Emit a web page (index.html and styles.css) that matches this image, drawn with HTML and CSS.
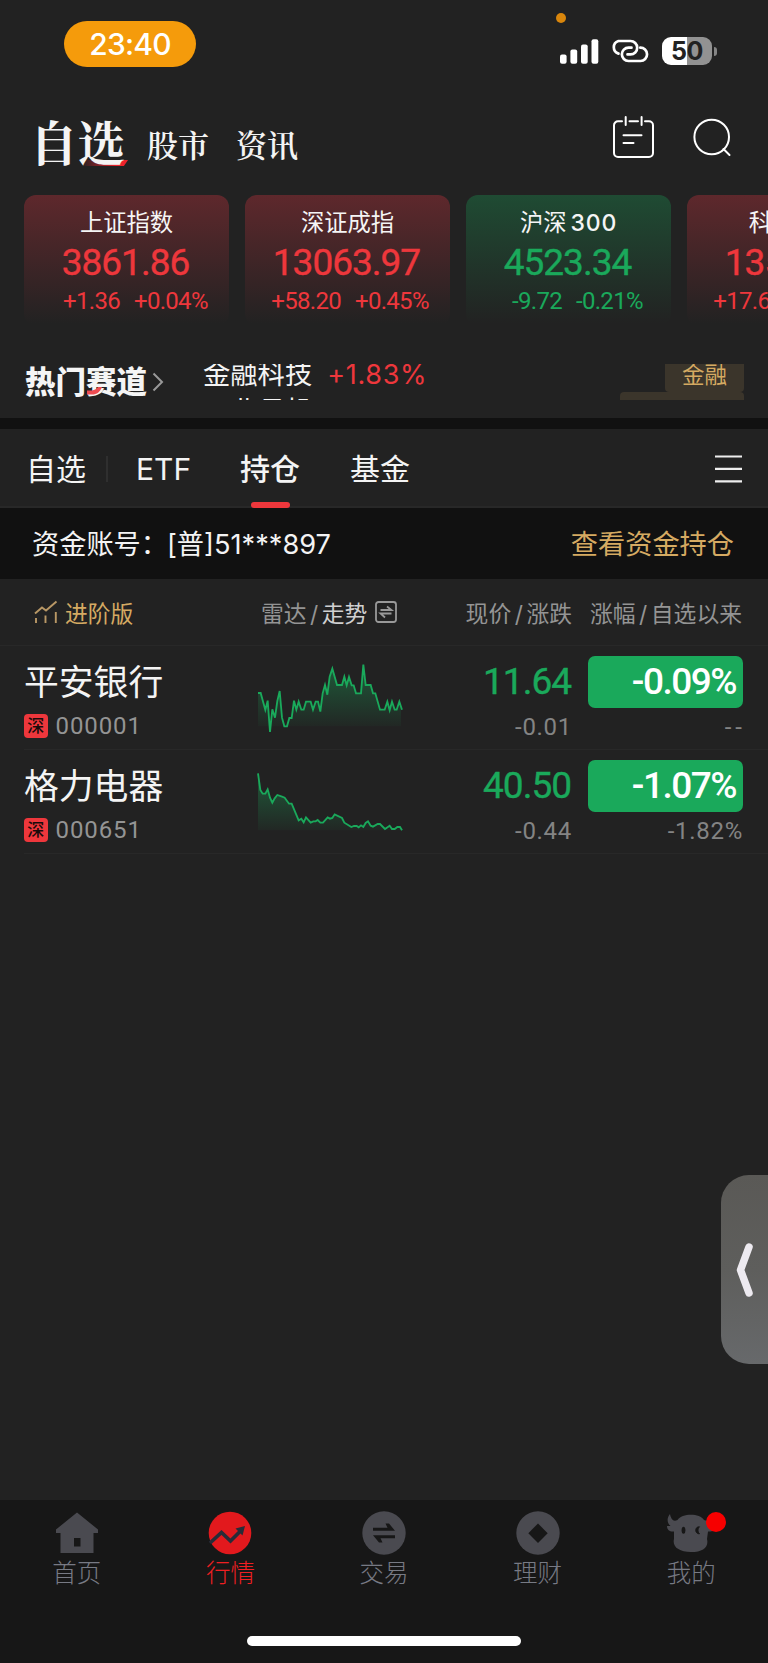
FILE: index.html
```html
<!DOCTYPE html>
<html lang="zh-CN">
<head>
<meta charset="utf-8">
<title>自选</title>
<link rel="stylesheet" href="styles.css">
</head>
<body>
<div class="app">
  <header class="status">
    <span class="clock">23:40</span>
    <span class="mic-dot"></span>
    <div class="status-icons">
      <svg class="signal" width="39" height="25" viewBox="0 0 39 25" fill="#fff"><rect x="0" y="15.5" width="6.6" height="9.3" rx="2"/><rect x="10.4" y="10.5" width="6.8" height="14.3" rx="2"/><rect x="21" y="5.5" width="6.7" height="19.3" rx="2"/><rect x="31.5" y=".3" width="6.8" height="24.5" rx="2"/></svg>
      <svg class="link" width="39" height="24" viewBox="0 0 39 24" fill="none" stroke="#fff" stroke-width="2.7" stroke-linecap="round"><path d="M8.500 14.600A6.600 6.600 0 0 1 8.400 2H20.500A6.600 6.600 0 0 1 20.500 15.400H17.500"/><path d="M30.300 8.700A6.600 6.600 0 0 1 30.500 22H18.500A6.600 6.600 0 0 1 18.500 8.700H21.500"/></svg>
      <div class="battery"><b>50</b></div>
      <span class="nub"></span>
    </div>
  </header>

  <nav class="top">
    <span class="top-main">自选</span>
    <span class="top-item">股市</span>
    <span class="top-item">资讯</span>
    <svg class="calendar" width="42" height="44" viewBox="0 0 42 44" fill="none" stroke="#fff" stroke-width="2" stroke-linecap="round"><path d="M9 6.300H5a4 4 0 0 0-4 4V38a4 4 0 0 0 4 4H36a4 4 0 0 0 4-4V10.300a4 4 0 0 0-4-4H32M16.500 6.300H25M12.700 2V10M28.600 2V10M10.500 20.200H28.500M10.500 28H20.500"/></svg>
    <svg class="search" width="40" height="40" viewBox="0 0 40 40" fill="none" stroke="#fff" stroke-width="2" stroke-linecap="round"><circle cx="18.700" cy="19" r="17.300"/><path d="M30.500 31L36.500 37"/></svg>
  </nav>

  <section class="indices">
    <div class="card up"><h3>上证指数</h3><strong>3861.86</strong><p><span>+1.36</span><span>+0.04%</span></p></div>
    <div class="card up"><h3>深证成指</h3><strong>13063.97</strong><p><span>+58.20</span><span>+0.45%</span></p></div>
    <div class="card down"><h3>沪深<i>300</i></h3><strong>4523.34</strong><p><span>-9.72</span><span>-0.21%</span></p></div>
    <div class="card up"><h3>科创<i>50</i></h3><strong>1350.52</strong><p><span>+17.68</span><span>+1.33%</span></p></div>
  </section>

  <section class="hot">
    <h2>热门赛道<svg width="16" height="8" viewBox="0 0 16 8"><path d="M0 3.500C5 4 9 3 11 0H15C13 5 10 7.500 5 7.500H0z" fill="#ee4b50"/></svg></h2>
    <svg class="chev" width="12" height="20" viewBox="0 0 12 20" fill="none" stroke="#999" stroke-width="2"><path d="M1.500 1.500L10 10L1.500 18.500"/></svg>
    <div class="ticker">
      <div class="tick"><span>金融科技</span><em>+1.83%</em><mark>金融</mark></div>
      <div class="tick next"><span>工业母机</span><em>+1.52%</em><mark>科技成长</mark></div>
    </div>
  </section>

  <nav class="tabs">
    <span class="tab first">自选</span>
    <i class="sep"></i>
    <span class="tab etf">ETF</span>
    <span class="tab active">持仓</span>
    <span class="tab fund">基金</span>
    <svg class="menu" width="27" height="28" viewBox="0 0 27 28" stroke="#eee" stroke-width="2.200"><path d="M0 1.500H27M0 13.900H27M0 26.300H27"/></svg>
  </nav>

  <section class="account"><span>资金账号：</span><span class="acct">[普]51***897</span><a>查看资金持仓</a></section>

  <section class="cols">
    <svg class="adv" width="24" height="24" viewBox="0 0 24 24" fill="none" stroke="#b99866" stroke-width="1.900"><path d="M1 13.500L8 7.500L12 10.500L22.500 1.500M2 18V23M11.500 15.500V23M21.800 12V23"/></svg>
    <span class="gold">进阶版</span>
    <span class="trend">雷达<i>/</i><b>走势</b></span>
    <svg class="swap" width="22" height="22" viewBox="0 0 22 22" fill="none" stroke="#999" stroke-width="1.800"><rect x="1" y="1" width="20" height="20" rx="2.500"/><path d="M5.500 9H16.500L12 5.500M16.500 12.500H5.500L10 16.500"/></svg>
    <span class="c-price">现价<i>/</i>涨跌</span>
    <span class="c-pct">涨幅<i>/</i>自选以来</span>
  </section>

  <section class="stock">
    <div class="who"><h4>平安银行</h4><p><span class="mk">深</span>000001</p></div>
    <svg width="148" height="104" viewBox="768 20 444 312"><defs><linearGradient id="g" x1="0" y1="0" x2="0" y2="1"><stop offset="0" stop-color="#1aa95b" stop-opacity=".42"/><stop offset="1" stop-color="#1aa95b" stop-opacity=".04"/></linearGradient></defs>
    <path fill="url(#g)" d="M774 261V161H782L796 212L803 184L810 261L817 210L825 235L832 185L839 155L846 235L853 261L861 261L868 236H875L882 184L889 211L896 187L904 211H911L918 187H932L939 211L947 187H954L961 217L968 162L975 137L982 166L989 112L997 88L1011 137H1026L1033 112L1040 138L1047 113L1055 138H1061L1068 162H1083L1090 76L1097 137H1112L1119 162H1126L1140 211H1154L1162 187L1169 213L1176 187L1184 211H1190L1198 187L1203 200V261z"/>
    <polyline class="line" points="774,161 782,161 796,212 803,184 810,278 817,210 825,235 832,185 839,155 846,235 853,261 861,261 868,236 875,236 882,184 889,211 896,187 904,211 911,211 918,187 932,187 939,211 947,187 954,187 961,217 968,162 975,137 982,166 989,112 997,88 1004,112 1011,137 1026,137 1033,112 1040,138 1047,113 1055,138 1061,138 1068,162 1083,162 1090,76 1097,137 1112,137 1119,162 1126,162 1140,211 1154,211 1162,187 1169,213 1176,187 1184,211 1190,211 1198,187 1206,211"/></svg>
    <div class="price"><strong>11.64</strong><span>-0.01</span></div>
    <div class="pct"><strong>-0.09%</strong><span class="none">--</span></div>
  </section>
  <section class="stock">
    <div class="who"><h4>格力电器</h4><p><span class="mk">深</span>000651</p></div>
    <svg width="148" height="104" viewBox="768 332 444 312">
    <path fill="url(#g)" d="M774 573V402L781 452L788 463H796L803 450L810 475L817 490L832 467L854 475L867 493H875L896 543L904 538L911 549L918 534L932 550L953 542L961 550H969L983 534L997 536L1004 525L1026 536L1033 550L1054 563L1083 558L1104 546L1119 562L1140 554L1155 569L1203 570V573z"/>
    <polyline class="line" points="774,402 781,452 788,463 796,463 803,450 810,475 817,490 824,477 832,467 846,472 854,475 867,493 875,493 896,543 904,538 911,549 918,534 932,550 940,546 947,546 953,542 961,550 969,550 983,534 990,538 997,536 1004,525 1026,536 1033,550 1054,563 1062,560 1070,560 1076,564 1083,558 1090,563 1097,551 1104,546 1112,559 1119,562 1133,554 1140,554 1155,569 1169,559 1176,569 1184,569 1192,563 1200,563 1206,573"/></svg>
    <div class="price"><strong>40.50</strong><span>-0.44</span></div>
    <div class="pct"><strong>-1.07%</strong><span>-1.82%</span></div>
  </section>

  <div class="space"></div>

  <footer class="bar">
    <div class="nav"><svg width="44" height="44" viewBox="0 0 44 44" fill="#4a4a50"><path fill-rule="evenodd" d="M22 1.500L43 18.500V22H38.500V42H5.500V22H1V18.500zM19 27V35.500H25.500V27z"/></svg><span>首页</span></div>
    <div class="nav on"><svg width="44" height="44" viewBox="0 0 44 44"><circle cx="22" cy="22" r="21.300" fill="#e2191d"/><path d="M2 32L13.500 21.500L22.500 30L33 19.500" fill="none" stroke="#282c38" stroke-width="3.700"/><path d="M27.500 17.500L37 15L34.500 24.500z" fill="#282c38"/></svg><span>行情</span></div>
    <div class="nav"><svg width="44" height="44" viewBox="0 0 44 44"><circle cx="22" cy="22" r="21.700" fill="#4a4a50"/><path d="M11 16.700H25.500L23.500 12.500H27L33 19.700H11zM33 27.300H18.500L20.500 31.500H17L11 24.300H33z" fill="#171717"/></svg><span>交易</span></div>
    <div class="nav"><svg width="44" height="44" viewBox="0 0 44 44"><circle cx="22" cy="22" r="21.700" fill="#4a4a50"/><path d="M22 12.500L31.700 22.200L22 32L12.300 22.200z" fill="#171717"/></svg><span>理财</span></div>
    <div class="nav"><svg width="48" height="44" viewBox="0 0 48 44" fill="#4a4a50"><path d="M3 3C-.5 7 0 12 3.500 15H0C0 19 3 21 7 20.500V28C5 36 12 41 24 41C36 41 42 36 40 28L41 20.500C45 21 48 19.500 48 16L45.500 15C49 12 49 7 45.500 3C45.500 7 43 11 37 9C33 2 15 2 10.500 9C6 11 4 8 3 3z"/><ellipse cx="16.500" cy="19.300" rx="1.900" ry="3.500" fill="#171717"/><path d="M32.500 15.800C27.500 15.500 27.500 23 32.500 22.800C30.500 21 30.500 17.500 32.500 15.800z" fill="#171717" stroke="#171717"/></svg><span>我的</span><i class="dot"></i></div>
  </footer>
  <span class="home"></span>
  <div class="handle"><svg width="20" height="56" viewBox="0 0 20 56" fill="none" stroke="#edeaf0" stroke-width="7.500" stroke-linecap="round" stroke-linejoin="round"><path d="M14 5L5.500 28L14 51"/></svg></div>
</div>
</body>
</html>
```
FILE: styles.css
```css
* { box-sizing: border-box; }
body, h2, h3, h4, p { margin: 0; }
i, em { font-style: normal; }
body { background: #222; color: #f4f4f4; font-family: Inter, "Noto Sans CJK SC", sans-serif; }
.app { position: relative; width: 768px; height: 1663px; overflow: hidden; display: flex; flex-direction: column; white-space: nowrap; }
.app > * { flex-shrink: 0; }
svg { display: block; flex-shrink: 0; }

.status { position: relative; height: 100px; padding: 21px 51px 0 64px; display: flex; justify-content: space-between; align-items: flex-start; }
.clock { width: 132px; height: 46px; border-radius: 23px; background: #f59b0b; color: #fff; font-size: 30px; font-weight: 500; line-height: 46px; letter-spacing: -.8px; text-align: center; }
.mic-dot { position: absolute; left: 556px; top: 13px; width: 10px; height: 10px; border-radius: 50%; background: #d9860c; }
.status-icons { display: flex; align-items: center; padding-top: 16px; }
.link { margin: 0 13px 0 11px; }
.battery { width: 50px; height: 28px; border-radius: 9px; background: linear-gradient(90deg, #fff 50%, #929292 50%); text-align: center; line-height: 28px; font-size: 25px; letter-spacing: -.5px; color: #222; }
.nub { width: 3px; height: 9px; margin-left: 2px; border-radius: 0 4px 4px 0; background: #858585; }

.top { height: 95px; display: flex; padding: 0 35px 0 30px; align-items: flex-start; font-family: "Noto Serif CJK SC", "Noto Sans CJK SC", serif; }
.top-main { width: 97px; margin-right: 17px; font-size: 47.500px; font-weight: 700; line-height: 81px; position: relative; }
.top-main::before { content: ""; position: absolute; z-index: -1; left: 52px; top: 60px; width: 46px; height: 6px; background: linear-gradient(90deg, transparent, #ee232c 75%); clip-path: polygon(0 0, 100% 0, 91% 100%, 0 100%); }
.top-item { font-size: 31px; font-weight: 600; line-height: 88px; margin-left: 3px; margin-right: 24px; }
.calendar { margin: 15px 38px 0 auto; }
.search { margin-top: 18px; }

.indices { height: 131px; padding-left: 24px; display: flex; gap: 16px; overflow: hidden; }
.card { width: 205px; flex: none; border-radius: 12px; text-align: center; font-family: Roboto, "Noto Sans CJK SC", sans-serif; }
.up { background: linear-gradient(#5e282c, #222 98%); color: #ee373c; }
.down { background: linear-gradient(#1f4b33, #222 98%); color: #1aa95b; }
.card h3 { color: #f5f5f5; font: 400 23.300px/52px "Noto Sans CJK SC", sans-serif; height: 48px; }
.card h3 i { font-family: Inter, sans-serif; font-weight: 500; margin-left: 4px; font-size: 23px; letter-spacing: .8px; }
.card strong { display: block; font-weight: 400; font-size: 37px; line-height: 39px; height: 38px; letter-spacing: -1px; -webkit-text-stroke: .4px; margin-left: -2px; }
.card p { display: grid; grid-template-columns: 96px 1fr; column-gap: 14px; padding-top: 6px; font-size: 24px; line-height: 28px; letter-spacing: -.7px; }
.card p span:first-child { text-align: right; }
.card p span:last-child { text-align: left; }

.hot { height: 92px; display: flex; padding: 38px 24px 0; }
.hot h2 { position: relative; margin-left: 1px; font: 900 30.500px/32px "Noto Sans CJK SC", sans-serif; color: #f5f5f5; }
.hot h2 svg { position: absolute; left: 62px; top: 23px; }
.chev { margin: 8px 0 0 5px; }
.ticker { margin-left: 39px; flex: 1; height: 36px; overflow: hidden; }
.tick { display: flex; height: 34px; margin-top: -6px; align-items: center; font-size: 27.300px; line-height: 34px; }
.tick em { margin-left: 15px; color: #ee373c; font-size: 27px; letter-spacing: .7px; }
.tick mark { margin-left: auto; height: 34px; padding: 0 17px; border-radius: 4px; background: #3b352b; color: #d5aa62; font-size: 22.500px; }
.tick.next { margin-top: 0; }
.next span, .next em { padding-top: 6px; }
.next mark { padding: 4px 17px 0; }

.tabs { position: relative; height: 90px; border-top: 11px solid #111; border-bottom: 2px solid #282828; display: flex; align-items: center; padding: 2px 26px 0 26px; font-size: 30px; line-height: 40px; }
.sep { width: 2px; height: 26px; margin: 0 28px 0 20px; background: #2f2f2f; }
.etf { font-size: 30px; }
.active { margin: 0 50px 0 49px; font-weight: 500; position: relative; }
.active::after { content: ""; position: absolute; left: 11px; top: 53px; width: 39px; height: 6px; border-radius: 3px; background: #ee373c; }
.menu { margin-left: auto; }

.account { height: 71px; background: #111; display: flex; align-items: center; padding: 0 34px 3px 32px; font-size: 27.200px; }
.acct { margin-left: -1px; }
.account a { margin-left: auto; color: #d5aa62; }

.cols { height: 67px; border-bottom: 1px solid #282828; display: flex; align-items: center; padding: 0 26px 0 34px; font-size: 22.800px; color: #949494; }
.gold { color: #d5aa62; margin: 0 0 0 7px; width: 196px; }
.cols i { margin: 0 3.500px; }
.cols b { color: #d0d0d0; font-weight: 400; }
.swap { margin-left: 8px; }
.c-price { margin-left: auto; margin-right: 18px; }

.stock { height: 104px; padding-right: 25px; margin-left: 24px; border-bottom: 1px solid #282828; display: flex; }
.who { width: 232px; }
.who h4 { font: 400 34.800px/40px "Noto Sans CJK SC", sans-serif; margin-top: 14px; }
.who p { display: flex; align-items: center; gap: 8px; margin-top: 14px; line-height: 24px; color: #949494; font-family: Roboto, sans-serif; font-size: 24px; letter-spacing: .9px; }
.mk { width: 23.500px; height: 24px; border-radius: 4px; background: #ee373c; color: #190b0b; font: 500 17px/22px "Noto Sans CJK SC", sans-serif; text-align: center; letter-spacing: 0; }
.line { fill: none; stroke: #1aa95b; stroke-width: 5.500; }
.price, .pct { text-align: right; font-family: Roboto, sans-serif; }
.price { flex: 1; color: #1aa95b; margin-right: 16px; padding-top: 9px; }
.price strong, .pct strong { display: block; height: 52px; line-height: 52px; font-size: 37px; font-weight: 400; letter-spacing: -1px; padding-right: 1px; -webkit-text-stroke: .4px; }
.price span, .pct span { display: block; margin-top: 5px; line-height: 28px; font-size: 24px; color: #848484; letter-spacing: .7px; }
.pct span.none { letter-spacing: 4px; margin-right: -3px; }
.pct { width: 155px; padding-top: 10px; }
.price { padding-top: 10px; }
.pct strong { border-radius: 7px; background: #1aa95b; color: #fff; font-weight: 500; padding-right: 7px; letter-spacing: -1.500px; -webkit-text-stroke: 0; }

.space { flex: 1; }
.bar { height: 163px; background: #171717; display: grid; grid-template-columns: repeat(5, 1fr); }
.nav { position: relative; display: flex; flex-direction: column; align-items: center; padding: 11px 0 0; color: #777a84; font-size: 24.500px; font-weight: 300; }
.nav span { line-height: 34px; margin-top: 1px; }
.nav.on { color: #f01f22; }
.dot { position: absolute; left: 92px; top: 12px; width: 20px; height: 20px; border-radius: 50%; background: #f70000; }
.home { position: absolute; left: 247px; top: 1636px; width: 274px; height: 10px; border-radius: 5px; background: #fff; }
.handle { position: absolute; left: 721px; top: 1175px; width: 47px; height: 189px; border-radius: 28px 0 0 28px; background: linear-gradient(#5a5956, #5e5e5c 50%, #67696b); display: flex; align-items: center; padding-left: 14px; }
```
